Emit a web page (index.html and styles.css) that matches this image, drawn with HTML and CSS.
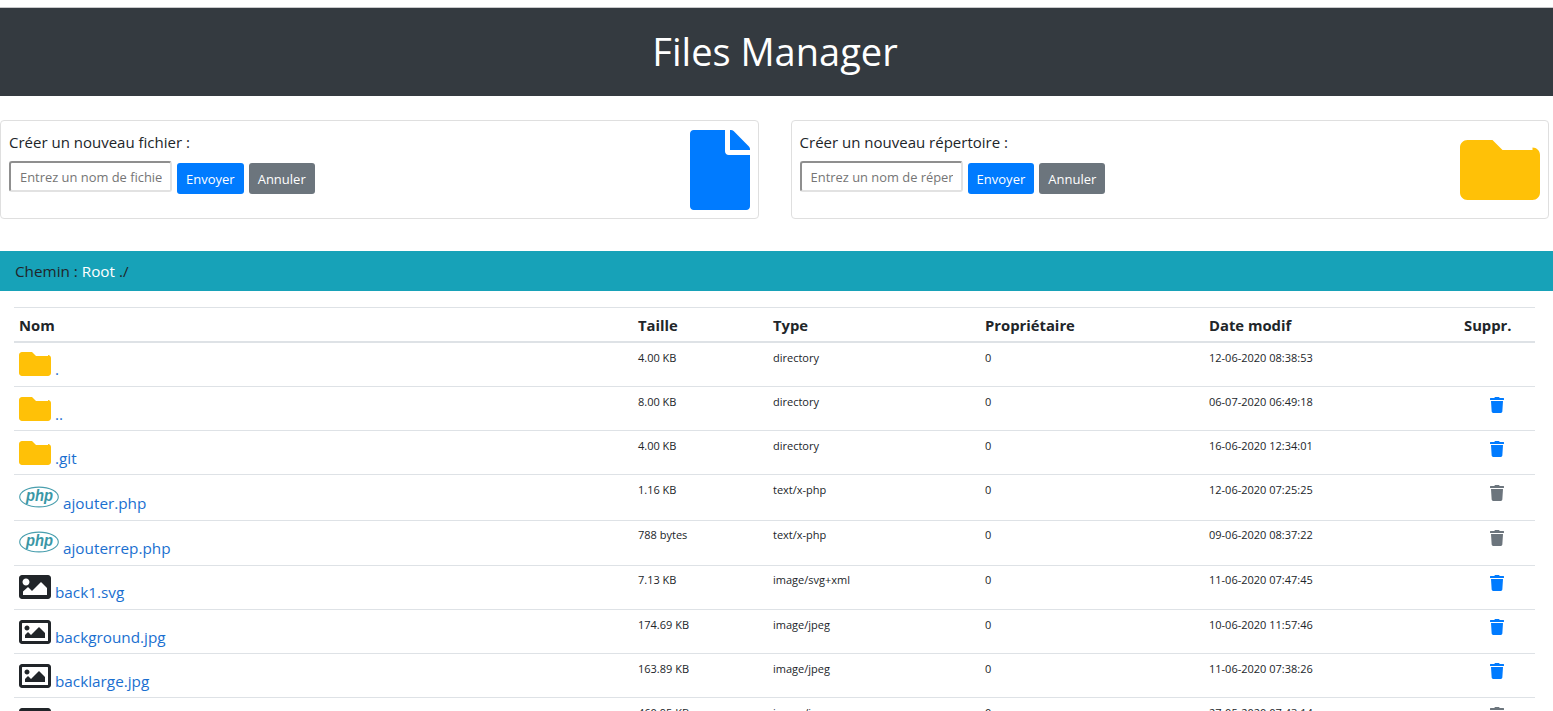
FILE: index.html
```html
<!DOCTYPE html>
<html lang="fr">
<head>
<meta charset="utf-8">
<title>Files Manager</title>
<link rel="stylesheet" href="styles.css">
</head>
<body>
<svg class="defs" width="0" height="0" aria-hidden="true">
  <defs>
    <symbol id="folder" viewBox="0 0 512 512"><path d="M464 128H272l-64-64H48C21.49 64 0 85.49 0 112v288c0 26.51 21.49 48 48 48h416c26.51 0 48-21.49 48-48V160c0-26.51-21.49-48-48-48z"/></symbol>
    <symbol id="file" viewBox="0 0 384 512"><path d="M224 136V0H24C10.7 0 0 10.7 0 24v464c0 13.3 10.7 24 24 24h336c13.3 0 24-10.7 24-24V160H248c-13.2 0-24-10.8-24-24zm160-14.1v6.1H256V0h6.1c6.4 0 12.5 2.5 17 7l97.9 98c4.5 4.5 7 10.6 7 16.9z"/></symbol>
    <symbol id="trash" viewBox="0 0 448 512"><path d="M432 32H312l-9.4-18.7A24 24 0 0 0 281.1 0H166.8a23.72 23.72 0 0 0-21.4 13.3L136 32H16A16 16 0 0 0 0 48v32a16 16 0 0 0 16 16h416a16 16 0 0 0 16-16V48a16 16 0 0 0-16-16zM53.2 467a48 48 0 0 0 47.9 45h245.8a48 48 0 0 0 47.9-45L416 128H32z"/></symbol>
    <symbol id="img-solid" viewBox="0 0 512 512"><path d="M464 448H48c-26.51 0-48-21.49-48-48V112c0-26.51 21.49-48 48-48h416c26.51 0 48 21.49 48 48v288c0 26.51-21.49 48-48 48zM112 120c-30.928 0-56 25.072-56 56s25.072 56 56 56 56-25.072 56-56-25.072-56-56-56zM64 384h384V272l-87.515-87.515c-4.686-4.686-12.284-4.686-16.971 0L208 320l-55.515-55.515c-4.686-4.686-12.284-4.686-16.971 0L64 328v56z"/></symbol>
    <symbol id="img-outline" viewBox="0 0 512 512"><path d="M464 64H48C21.49 64 0 85.49 0 112v288c0 26.51 21.49 48 48 48h416c26.51 0 48-21.49 48-48V112c0-26.51-21.49-48-48-48zm-6 336H54a6 6 0 0 1-6-6V118a6 6 0 0 1 6-6h404a6 6 0 0 1 6 6v276a6 6 0 0 1-6 6zM128 152c-22.091 0-40 17.909-40 40s17.909 40 40 40 40-17.909 40-40-17.909-40-40-40zM96 352h320v-80l-87.515-87.515c-4.686-4.686-12.284-4.686-16.971 0L192 304l-39.515-39.515c-4.686-4.686-12.284-4.686-16.971 0L96 304v48z"/></symbol>
    <symbol id="php" viewBox="0 0 40 22">
      <ellipse cx="20" cy="11" rx="19.3" ry="9.9" fill="none" stroke="#4a9fae" stroke-width="1.1"/>
      <text x="7" y="14.5" textLength="27" lengthAdjust="spacingAndGlyphs" class="php-text">php</text>
    </symbol>
  </defs>
</svg>

<header class="banner"><h1 class="banner-title">Files Manager</h1></header>

<section class="forms">
  <form class="card">
    <div class="card-main">
      <label class="card-label">Créer un nouveau fichier :</label>
      <div class="controls">
        <input class="name-input" type="text" placeholder="Entrez un nom de fichier">
        <button class="btn btn-blue" type="button">Envoyer</button>
        <button class="btn btn-grey" type="button">Annuler</button>
      </div>
    </div>
    <svg class="card-icon icon-file"><use href="#file"/></svg>
  </form>
  <form class="card">
    <div class="card-main">
      <label class="card-label">Créer un nouveau répertoire :</label>
      <div class="controls">
        <input class="name-input" type="text" placeholder="Entrez un nom de répertoire">
        <button class="btn btn-blue" type="button">Envoyer</button>
        <button class="btn btn-grey" type="button">Annuler</button>
      </div>
    </div>
    <svg class="card-icon icon-dir"><use href="#folder"/></svg>
  </form>
</section>

<nav class="path">Chemin : <a class="path-root" href="#">Root</a> ./</nav>

<main class="listing">
  <table class="files">
    <colgroup><col class="c-name"><col class="c-size"><col class="c-type"><col class="c-owner"><col class="c-date"><col class="c-del"></colgroup>
    <thead>
      <tr><th>Nom</th><th>Taille</th><th>Type</th><th>Propriétaire</th><th>Date modif</th><th>Suppr.</th></tr>
    </thead>
    <tbody>
      <tr><td class="name"><svg class="ico i-folder"><use href="#folder"/></svg> <a href="#">.</a></td><td>4.00 KB</td><td>directory</td><td>0</td><td>12-06-2020 08:38:53</td><td></td></tr>
      <tr><td class="name"><svg class="ico i-folder"><use href="#folder"/></svg> <a href="#">..</a></td><td>8.00 KB</td><td>directory</td><td>0</td><td>06-07-2020 06:49:18</td><td class="del"><svg class="trash t-blue"><use href="#trash"/></svg></td></tr>
      <tr><td class="name"><svg class="ico i-folder"><use href="#folder"/></svg> <a href="#">.git</a></td><td>4.00 KB</td><td>directory</td><td>0</td><td>16-06-2020 12:34:01</td><td class="del"><svg class="trash t-blue"><use href="#trash"/></svg></td></tr>
      <tr class="r-php1"><td class="name name-php"><svg class="ico i-php"><use href="#php"/></svg> <a href="#">ajouter.php</a></td><td>1.16 KB</td><td>text/x-php</td><td>0</td><td>12-06-2020 07:25:25</td><td class="del"><svg class="trash t-grey"><use href="#trash"/></svg></td></tr>
      <tr class="r-php2 r-high"><td class="name name-php"><svg class="ico i-php"><use href="#php"/></svg> <a href="#">ajouterrep.php</a></td><td>788 bytes</td><td>text/x-php</td><td>0</td><td>09-06-2020 08:37:22</td><td class="del"><svg class="trash t-grey"><use href="#trash"/></svg></td></tr>
      <tr class="r-high"><td class="name"><svg class="ico i-image"><use href="#img-solid"/></svg> <a href="#">back1.svg</a></td><td>7.13 KB</td><td>image/svg+xml</td><td>0</td><td>11-06-2020 07:47:45</td><td class="del"><svg class="trash t-blue"><use href="#trash"/></svg></td></tr>
      <tr><td class="name"><svg class="ico i-image"><use href="#img-outline"/></svg> <a href="#">background.jpg</a></td><td>174.69 KB</td><td>image/jpeg</td><td>0</td><td>10-06-2020 11:57:46</td><td class="del"><svg class="trash t-blue"><use href="#trash"/></svg></td></tr>
      <tr><td class="name"><svg class="ico i-image"><use href="#img-outline"/></svg> <a href="#">backlarge.jpg</a></td><td>163.89 KB</td><td>image/jpeg</td><td>0</td><td>11-06-2020 07:38:26</td><td class="del"><svg class="trash t-blue"><use href="#trash"/></svg></td></tr>
      <tr><td class="name"><svg class="ico i-image"><use href="#img-outline"/></svg> <a href="#">bg.jpg</a></td><td>460.95 KB</td><td>image/jpeg</td><td>0</td><td>27-05-2020 07:43:14</td><td class="del"><svg class="trash t-grey"><use href="#trash"/></svg></td></tr>
    </tbody>
  </table>
</main>
</body>
</html>
```

FILE: styles.css
```css
* { box-sizing: border-box; }
html { overflow: hidden; }
body {
  margin: 0;
  padding-top: 7px;
  font-family: "Open Sans", "Noto Sans", sans-serif;
  font-size: 15px;
  line-height: 24px;
  color: #212529;
  background: #fff;
}
.defs { position: absolute; }
.banner {
  height: 89px;
  background: #343a40;
  border-top: 1px solid #c8c9cb;
  display: flex;
  align-items: center;
  justify-content: center;
  padding: 0 3px 2px 0;
}
.banner-title {
  margin: 0;
  font-size: 38px;
  font-weight: 400;
  line-height: 46px;
  color: #fff;
}
.forms {
  display: grid;
  grid-template-columns: 758.6px 758.4px;
  gap: 32px;
  margin-top: 24px;
}
.card {
  height: 99px;
  border: 1px solid #dfdfdf;
  border-radius: 4px;
  padding: 9px 8px;
  display: flex;
  justify-content: space-between;
}
.card-label { display: block; font-size: 15px; line-height: 24px; }
.controls { display: flex; align-items: flex-start; gap: 5px; margin-top: 7px; }
.name-input {
  width: 163px;
  height: 31px;
  border-style: solid;
  border-width: 2px;
  border-color: #8f8f8f #e2e2e2 #e2e2e2 #8f8f8f;
  border-radius: 3px;
  padding: 0 8px 0 9px;
  font: 12.9px "Open Sans", sans-serif;
  color: #212529;
  background: #fff;
}
.name-input::placeholder { color: #757575; }
.btn {
  height: 31px;
  margin-top: 2px;
  padding: 0;
  border: 0;
  border-radius: 3px;
  font: 13px "Open Sans", sans-serif;
  color: #fff;
}
.btn-blue { background: #007bff; width: 66.7px; }
.btn-grey { background: #6c757d; width: 66px; }
.card-icon { display: block; }
.icon-file { width: 60px; height: 80px; fill: #007bff; }
.icon-dir { width: 80px; height: 80px; fill: #ffc107; }
.path {
  margin-top: 32px;
  height: 40px;
  padding: 0 15px;
  background: #17a2b8;
  font-size: 15.25px;
  line-height: 41px;
}
.path-root { color: #fff; text-decoration: none; }
.listing { padding: 16px 18px 0 14px; }
.files {
  width: 1521px;
  table-layout: fixed;
  border-collapse: collapse;
}
.c-name { width: 619px; }
.c-size { width: 135px; }
.c-type { width: 212px; }
.c-owner { width: 224px; }
.c-date { width: 255px; }
.c-del { width: 76px; }
.files th {
  height: 34px;
  padding: 5px 5px 3px;
  text-align: left;
  font-size: 14.8px;
  font-weight: 700;
  border-top: 1px solid #dee2e6;
  border-bottom: 2px solid #dee2e6;
}
.files tbody tr { height: 44px; }
.files tbody tr:first-child { height: 45px; }
.files tbody tr.r-php1 { height: 46px; }
.files tbody tr.r-php2 { height: 45px; }
.files td {
  padding: 5px;
  vertical-align: top;
  font-size: 11px;
  line-height: 20px;
  border-bottom: 1px solid #dee2e6;
  overflow: hidden;
}
.files tr.r-high td { padding-top: 4px; }
.files td.name {
  padding: 5.5px 5px 0;
  font-size: 15.3px;
  line-height: 24px;
  white-space: nowrap;
}
.files tr.r-high td.name { padding-top: 4.5px; }
.files td.name-php { padding-top: 11px; }
.files tr.r-high td.name-php { padding-top: 10px; }
.files a { color: #1a6fd0; text-decoration: none; }
.ico { display: inline-block; }
.i-folder, .i-image { width: 32px; height: 32px; vertical-align: -5px; }
.i-folder { fill: #ffc107; }
.i-image { fill: #212529; }
.i-php { width: 40px; height: 22px; vertical-align: 1px; }
.php-text { font: italic 700 16px "Liberation Sans", sans-serif; fill: #3a97a6; }
.files td.del { padding: 10px 0 0 31px; }
.files tr.r-high td.del, .files tr.r-high ~ tr td.del { padding-top: 9px; }
.trash { display: block; width: 14px; height: 16px; }
.t-blue { fill: #007bff; }
.t-grey { fill: #6c757d; }
```
